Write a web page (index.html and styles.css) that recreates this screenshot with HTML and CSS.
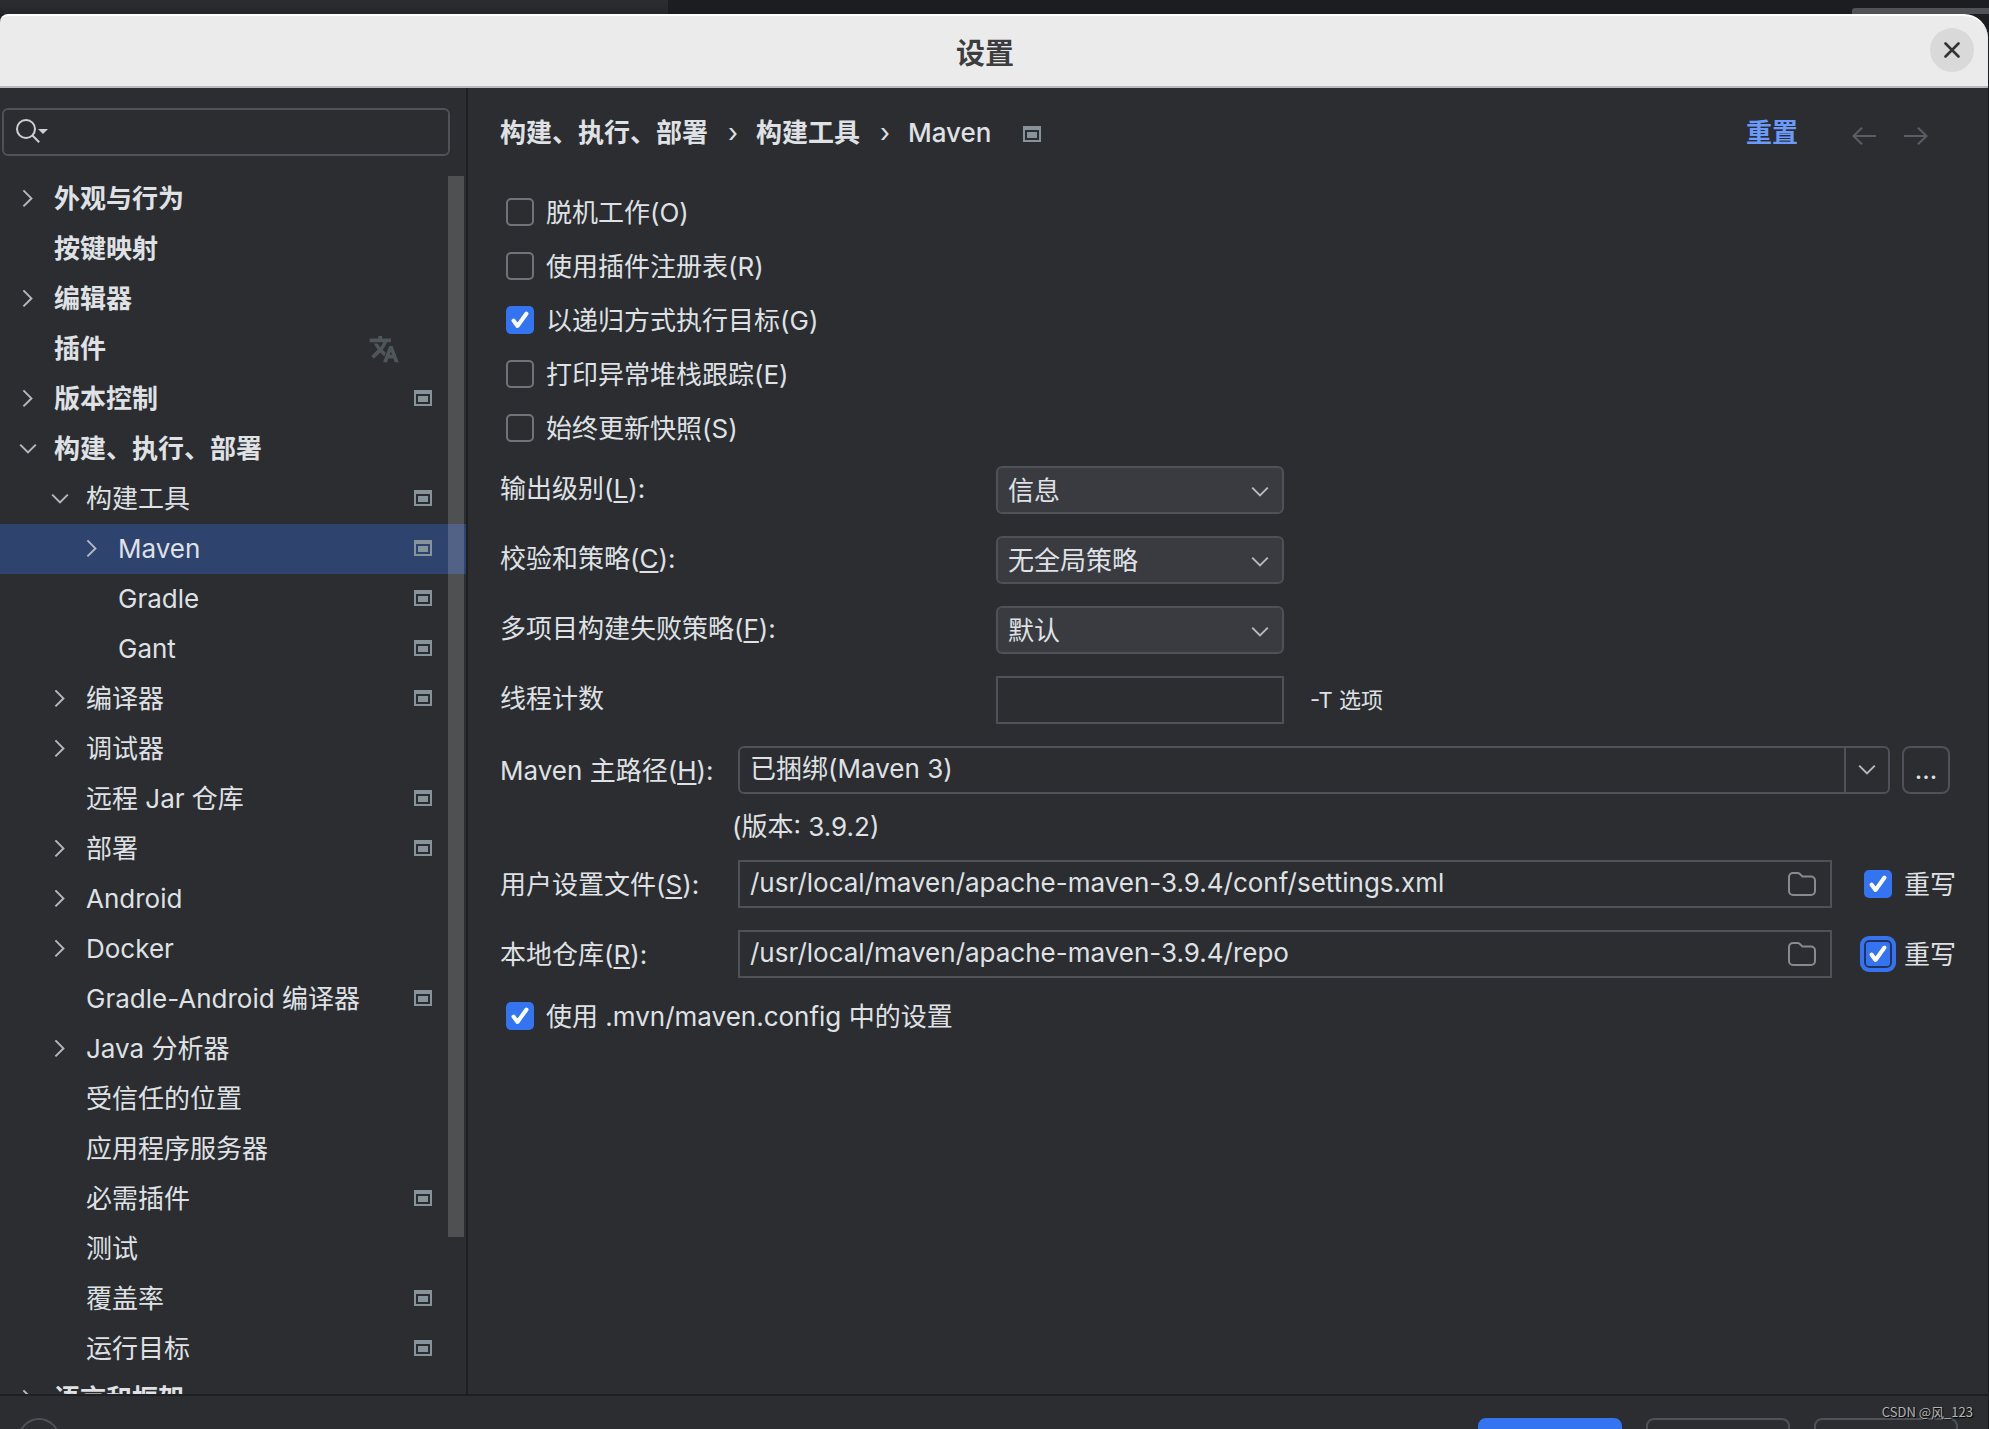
FILE: index.html
```html
<!DOCTYPE html>
<html lang="zh-CN">
<head>
<meta charset="utf-8">
<meta name="viewport" content="width=device-width, initial-scale=1">
<title>设置</title>
<link rel="stylesheet" href="styles.css">
</head>
<body>
<svg class="symbols" aria-hidden="true">
  <symbol id="right" viewBox="0 0 16 16"><path d="M5.700 3.700 9.700 7.700l-4 4" fill="none" stroke="currentColor" stroke-width="1"/></symbol>
  <symbol id="down" viewBox="0 0 16 16"><path d="M4.100 5.800 8 9.700l3.900-3.900" fill="none" stroke="currentColor" stroke-width="1"/></symbol>
  <symbol id="project" viewBox="0 0 18 16"><path fill-rule="evenodd" fill="currentColor" d="M0 0h18v16H0zM2 4v10h14V4zM4 6h10v6H4z"/></symbol>
  <symbol id="folder" viewBox="0 0 28 24"><path d="M1 5a4 4 0 0 1 4-4h4.600a3 3 0 0 1 2 .8L14.400 4.500h8.600a4 4 0 0 1 4 4V19a4 4 0 0 1-4 4H5a4 4 0 0 1-4-4z" fill="none" stroke="currentColor" stroke-width="2"/></symbol>
</svg>

<div class="backdrop"><div class="backdrop-panel"></div><div class="backdrop-bar"></div></div>

<div class="dialog">
  <header class="titlebar">
    <h1>设置</h1>
    <button class="close" aria-label="关闭"><svg width="16" height="16" viewBox="0 0 16 16"><path d="M1.500 1.500l13 13M14.500 1.500l-13 13" stroke="currentColor" stroke-width="2.600" stroke-linecap="round"/></svg></button>
  </header>

  <div class="body">
    <aside class="sidebar">
      <label class="search">
        <svg width="36" height="26" viewBox="0 0 36 26"><circle cx="10" cy="10" r="9" fill="none" stroke="currentColor" stroke-width="2"/><path d="M16.500 16.500l6.700 6.700" stroke="currentColor" stroke-width="2"/><path d="M22 10h10l-5 5z" fill="currentColor"/></svg>
        <input type="text" aria-label="搜索设置">
      </label>
      <div class="tree-view">
        <ul class="tree" role="tree">
          <li class="top"><svg class="arrow"><use href="#right"/></svg><span>外观与行为</span></li>
          <li class="top"><i class="arrow"></i><span>按键映射</span></li>
          <li class="top"><svg class="arrow"><use href="#right"/></svg><span>编辑器</span></li>
          <li class="top"><i class="arrow"></i><span>插件</span><svg class="translate" viewBox="0 0 24 24"><path d="M12.870 15.070l-2.540-2.510.03-.03A17.520 17.520 0 0 0 14.070 6H17V4h-7V2H8v2H1v2h11.170C11.500 7.920 10.440 9.750 9 11.350 8.070 10.320 7.300 9.190 6.690 8h-2c.73 1.630 1.730 3.170 2.980 4.560l-5.090 5.020L4 19l5-5 3.110 3.110.76-2.040zM18.500 10h-2L12 22h2l1.120-3h4.750L21 22h2l-4.500-12zm-2.620 7l1.620-4.330L19.120 17h-3.240z"/></svg></li>
          <li class="top"><svg class="arrow"><use href="#right"/></svg><span>版本控制</span><svg class="mark"><use href="#project"/></svg></li>
          <li class="top"><svg class="arrow"><use href="#down"/></svg><span>构建、执行、部署</span></li>
          <li class="sub"><svg class="arrow"><use href="#down"/></svg><span>构建工具</span><svg class="mark"><use href="#project"/></svg></li>
          <li class="leaf selected" aria-selected="true"><svg class="arrow"><use href="#right"/></svg><span>Maven</span><svg class="mark"><use href="#project"/></svg></li>
          <li class="leaf"><i class="arrow"></i><span>Gradle</span><svg class="mark"><use href="#project"/></svg></li>
          <li class="leaf"><i class="arrow"></i><span>Gant</span><svg class="mark"><use href="#project"/></svg></li>
          <li class="sub"><svg class="arrow"><use href="#right"/></svg><span>编译器</span><svg class="mark"><use href="#project"/></svg></li>
          <li class="sub"><svg class="arrow"><use href="#right"/></svg><span>调试器</span></li>
          <li class="sub"><i class="arrow"></i><span>远程 Jar 仓库</span><svg class="mark"><use href="#project"/></svg></li>
          <li class="sub"><svg class="arrow"><use href="#right"/></svg><span>部署</span><svg class="mark"><use href="#project"/></svg></li>
          <li class="sub"><svg class="arrow"><use href="#right"/></svg><span>Android</span></li>
          <li class="sub"><svg class="arrow"><use href="#right"/></svg><span>Docker</span></li>
          <li class="sub"><i class="arrow"></i><span>Gradle-Android 编译器</span><svg class="mark"><use href="#project"/></svg></li>
          <li class="sub"><svg class="arrow"><use href="#right"/></svg><span>Java 分析器</span></li>
          <li class="sub"><i class="arrow"></i><span>受信任的位置</span></li>
          <li class="sub"><i class="arrow"></i><span>应用程序服务器</span></li>
          <li class="sub"><i class="arrow"></i><span>必需插件</span><svg class="mark"><use href="#project"/></svg></li>
          <li class="sub"><i class="arrow"></i><span>测试</span></li>
          <li class="sub"><i class="arrow"></i><span>覆盖率</span><svg class="mark"><use href="#project"/></svg></li>
          <li class="sub"><i class="arrow"></i><span>运行目标</span><svg class="mark"><use href="#project"/></svg></li>
          <li class="top"><svg class="arrow"><use href="#right"/></svg><span>语言和框架</span></li>
        </ul>
        <div class="scroll-thumb"></div>
      </div>
    </aside>

    <main class="content">
      <div class="heading">
        <nav class="crumbs">
          <span>构建、执行、部署</span><span class="sep">›</span><span>构建工具</span><span class="sep">›</span><span class="current">Maven</span>
          <svg class="mark"><use href="#project"/></svg>
        </nav>
        <a class="reset" href="#">重置</a>
        <button class="nav" aria-label="后退"><svg width="24" height="18" viewBox="0 0 24 18"><path d="M10 .8L1.500 9l8.500 8.200M1.500 9H24" fill="none" stroke="currentColor" stroke-width="2"/></svg></button>
        <button class="nav" aria-label="前进"><svg width="24" height="18" viewBox="0 0 24 18"><path d="M14 .8L22.500 9 14 17.200M22.500 9H0" fill="none" stroke="currentColor" stroke-width="2"/></svg></button>
      </div>

      <div class="checks">
        <label class="check"><input type="checkbox"><span>脱机工作(O)</span></label>
        <label class="check"><input type="checkbox"><span>使用插件注册表(R)</span></label>
        <label class="check"><input type="checkbox" checked><span>以递归方式执行目标(G)</span></label>
        <label class="check"><input type="checkbox"><span>打印异常堆栈跟踪(E)</span></label>
        <label class="check"><input type="checkbox"><span>始终更新快照(S)</span></label>
      </div>

      <div class="options">
        <label for="level">输出级别(<u>L</u>):</label>
        <div class="select"><select id="level"><option>信息</option></select><svg class="arrow"><use href="#down"/></svg></div>
        <span></span>
        <label for="checksum">校验和策略(<u>C</u>):</label>
        <div class="select"><select id="checksum"><option>无全局策略</option></select><svg class="arrow"><use href="#down"/></svg></div>
        <span></span>
        <label for="fail">多项目构建失败策略(<u>F</u>):</label>
        <div class="select"><select id="fail"><option>默认</option></select><svg class="arrow"><use href="#down"/></svg></div>
        <span></span>
        <label for="threads">线程计数</label>
        <input class="box" id="threads" type="text">
        <span class="hint">-T 选项</span>
      </div>

      <div class="path home">
        <label for="home">Maven 主路径(<u>H</u>):</label>
        <div class="field combo"><input id="home" type="text" value="已捆绑(Maven 3)"><button aria-label="展开"><svg class="arrow"><use href="#down"/></svg></button></div>
        <button class="more">...</button>
      </div>
      <p class="version">(版本: 3.9.2)</p>
      <div class="path">
        <label for="settings">用户设置文件(<u>S</u>):</label>
        <div class="field"><input id="settings" type="text" value="/usr/local/maven/apache-maven-3.9.4/conf/settings.xml"><button aria-label="浏览"><svg class="folder"><use href="#folder"/></svg></button></div>
        <label class="check"><input type="checkbox" checked><span>重写</span></label>
      </div>
      <div class="path">
        <label for="repo">本地仓库(<u>R</u>):</label>
        <div class="field"><input id="repo" type="text" value="/usr/local/maven/apache-maven-3.9.4/repo"><button aria-label="浏览"><svg class="folder"><use href="#folder"/></svg></button></div>
        <label class="check"><input class="focused" type="checkbox" checked><span>重写</span></label>
      </div>
      <div class="checks">
        <label class="check"><input type="checkbox" checked><span>使用 .mvn/maven.config 中的设置</span></label>
      </div>
    </main>
  </div>

  <footer class="footer">
    <button class="help" aria-label="帮助">?</button>
    <button class="action primary" aria-label="确定"></button>
    <button class="action" aria-label="取消"></button>
    <button class="action" aria-label="应用"></button>
  </footer>
</div>
<div class="watermark">CSDN @风_123</div>
</body>
</html>
```
FILE: styles.css
```css
:root {
  --bg: #2b2d30;
  --line: #1e1f22;
  --border: #4e5157;
  --text: #dfe1e5;
  --blue: #3574f0;
  --icon: #ced0d6;
}

* { box-sizing: border-box; }

body {
  margin: 0;
  height: 100vh;
  display: flex;
  flex-direction: column;
  overflow: hidden;
  background: #1c1d20;
  color: var(--text);
  font: 26px/32px Inter, "Noto Sans CJK SC", sans-serif;
}

button, input, select {
  margin: 0;
  padding: 0;
  border: 0;
  background: none;
  color: inherit;
  font: inherit;
  outline: none;
}

svg { display: block; flex: none; }
.symbols { position: absolute; width: 0; height: 0; }

/* Editor window behind the dialog */
.backdrop { display: flex; justify-content: space-between; align-items: flex-end; height: 14px; flex: none; }
.backdrop-panel { width: 668px; height: 14px; background: linear-gradient(#2b2d30, #232528); }
.backdrop-bar { width: 137px; height: 6px; background: #505257; border-radius: 3px 0 0 0; }

.dialog { flex: 1; min-height: 0; margin-right: 1px; display: flex; flex-direction: column; }

.titlebar {
  flex: none;
  display: flex;
  align-items: center;
  height: 74px;
  padding-right: 14px;
  background: #ebebeb;
  border-top: 2px solid #fff;
  border-bottom: 2px solid #b9b9b9;
  border-radius: 8px 24px 0 0;
  color: #3d3d3d;
}
.titlebar h1 { flex: 1; margin: 0; padding: 6px 0 0 40px; text-align: center; font-size: 29px; line-height: 40px; font-weight: 700; }
.close {
  display: grid;
  place-items: center;
  width: 44px;
  height: 44px;
  margin-bottom: 2px;
  border-radius: 50%;
  background: #d9d9d9;
  color: #333;
}

.body { flex: 1; min-height: 0; display: flex; background: var(--bg); }

.sidebar { flex: none; width: 468px; display: flex; flex-direction: column; padding-top: 20px; border-right: 2px solid var(--line); }
.search {
  flex: none;
  display: flex;
  align-items: center;
  gap: 8px;
  height: 48px;
  margin: 0 16px 18px 2px;
  padding-left: 12px;
  border: 2px solid var(--border);
  border-radius: 6px;
  color: var(--icon);
}
.search input { flex: 1; min-width: 0; }

.tree-view { position: relative; flex: 1; min-height: 0; overflow: hidden; }
.tree { margin: 0; padding: 0; list-style: none; }
.tree li { display: flex; align-items: center; gap: 10px; height: 50px; padding: 0 34px 0 12px; white-space: nowrap; }
.tree span { flex: 1; }
.tree .top { font-weight: 700; }
.tree .sub { padding-left: 44px; }
.tree .leaf { padding-left: 76px; }
.tree .selected { background: #2e436e; }
.tree .mark { margin-bottom: 2px; }
.arrow { flex: none; width: 32px; height: 32px; color: #b4b8bf; }
.mark { width: 18px; height: 16px; color: #87939a; }
.translate { width: 30px; height: 30px; margin-right: 33px; fill: #4f575b; stroke: #4f575b; }
.scroll-thumb { position: absolute; top: 2px; right: 2px; width: 16px; height: 87%; background: rgba(255, 255, 255, .17); }

.content { flex: 1; min-width: 0; padding: 20px 32px 0; }

.heading { display: flex; align-items: center; height: 50px; margin-bottom: 33px; }
.crumbs { flex: 1; display: flex; align-items: center; gap: 20px; font-weight: 700; white-space: nowrap; }
.crumbs .sep { margin-right: -2px; font-weight: 400; }
.crumbs .current { font-weight: 500; }
.crumbs .mark { margin: 2px 0 0 12px; }
.reset { margin-right: 54px; color: #6b9bfa; font-weight: 700; text-decoration: none; }
.nav { margin: 6px 28px 0 0; color: #5a5d63; }

.checks { display: flex; flex-direction: column; gap: 12px; margin: 0 0 17px 6px; }
.check { display: flex; align-items: center; gap: 12px; height: 42px; white-space: nowrap; }
.check span { padding-top: 2px; }
.check input {
  appearance: none;
  flex: none;
  width: 28px;
  height: 28px;
  border: 2px solid #6f737a;
  border-radius: 5px;
}
.check input:checked {
  border: 0;
  background: var(--blue) url("data:image/svg+xml,%3Csvg xmlns='http://www.w3.org/2000/svg' viewBox='0 0 28 28'%3E%3Cpath d='M7.500 14.500l4 5.500L20.500 7.500' fill='none' stroke='white' stroke-width='4' stroke-linecap='round' stroke-linejoin='round'/%3E%3C/svg%3E");
}
.check .focused { box-shadow: 0 0 0 4px var(--blue), inset 0 0 0 2px #25325a; }

.options { display: grid; grid-template-columns: 496px 288px 1fr; grid-auto-rows: 48px; row-gap: 22px; align-items: center; margin-bottom: 22px; }
.options label { padding-bottom: 2px; }
u { text-underline-offset: 3px; text-decoration-thickness: 2px; }
.select { position: relative; }
.select select {
  appearance: none;
  display: block;
  width: 100%;
  height: 48px;
  padding: 2px 0 0 10px;
  background: #393b40;
  border: 2px solid var(--border);
  border-radius: 6px;
}
.select .arrow { position: absolute; top: 10px; right: 8px; pointer-events: none; }
.box { width: 100%; height: 48px; padding: 0 10px; border: 2px solid var(--border); }
.hint { padding-left: 26px; font-size: 22px; }

.path { display: flex; align-items: center; margin-bottom: 22px; }
.path > label:first-child { flex: none; width: 238px; padding-top: 2px; white-space: nowrap; }
.path .check { margin-left: 32px; }
.home { margin-bottom: 0; padding-right: 6px; }
.field { flex: 1; min-width: 0; display: flex; height: 48px; border: 2px solid var(--border); }
.field input { flex: 1; min-width: 0; padding: 0 0 2px 10px; }
.field button { display: grid; place-items: center; width: 56px; }
.folder { width: 28px; height: 24px; color: #868a91; }
.combo { border-radius: 6px; }
.combo button { width: 44px; border-left: 2px solid var(--border); }
.more { width: 48px; height: 48px; margin-left: 12px; border: 2px solid var(--border); border-radius: 8px; }
.version { margin: 0; padding: 17px 0 17px 232px; }
.path + .checks { margin-top: -5px; }

.footer {
  flex: none;
  display: flex;
  align-items: flex-start;
  gap: 24px;
  height: 35px;
  padding: 22px 30px 0 18px;
  overflow: hidden;
  background: var(--bg);
  border-top: 2px solid var(--line);
}
.help { width: 42px; height: 42px; margin-right: auto; border: 2px solid var(--border); border-radius: 50%; font-size: 26px; }
.action { width: 144px; height: 48px; border: 2px solid var(--border); border-radius: 8px; }
.primary { background: var(--blue); border-color: var(--blue); }

.watermark {
  position: absolute;
  right: 16px;
  bottom: 7px;
  font: 13px/20px "Noto Sans CJK SC", sans-serif;
  color: #b4b4b4;
  text-shadow: 1px 1px 1px #000;
}
```
